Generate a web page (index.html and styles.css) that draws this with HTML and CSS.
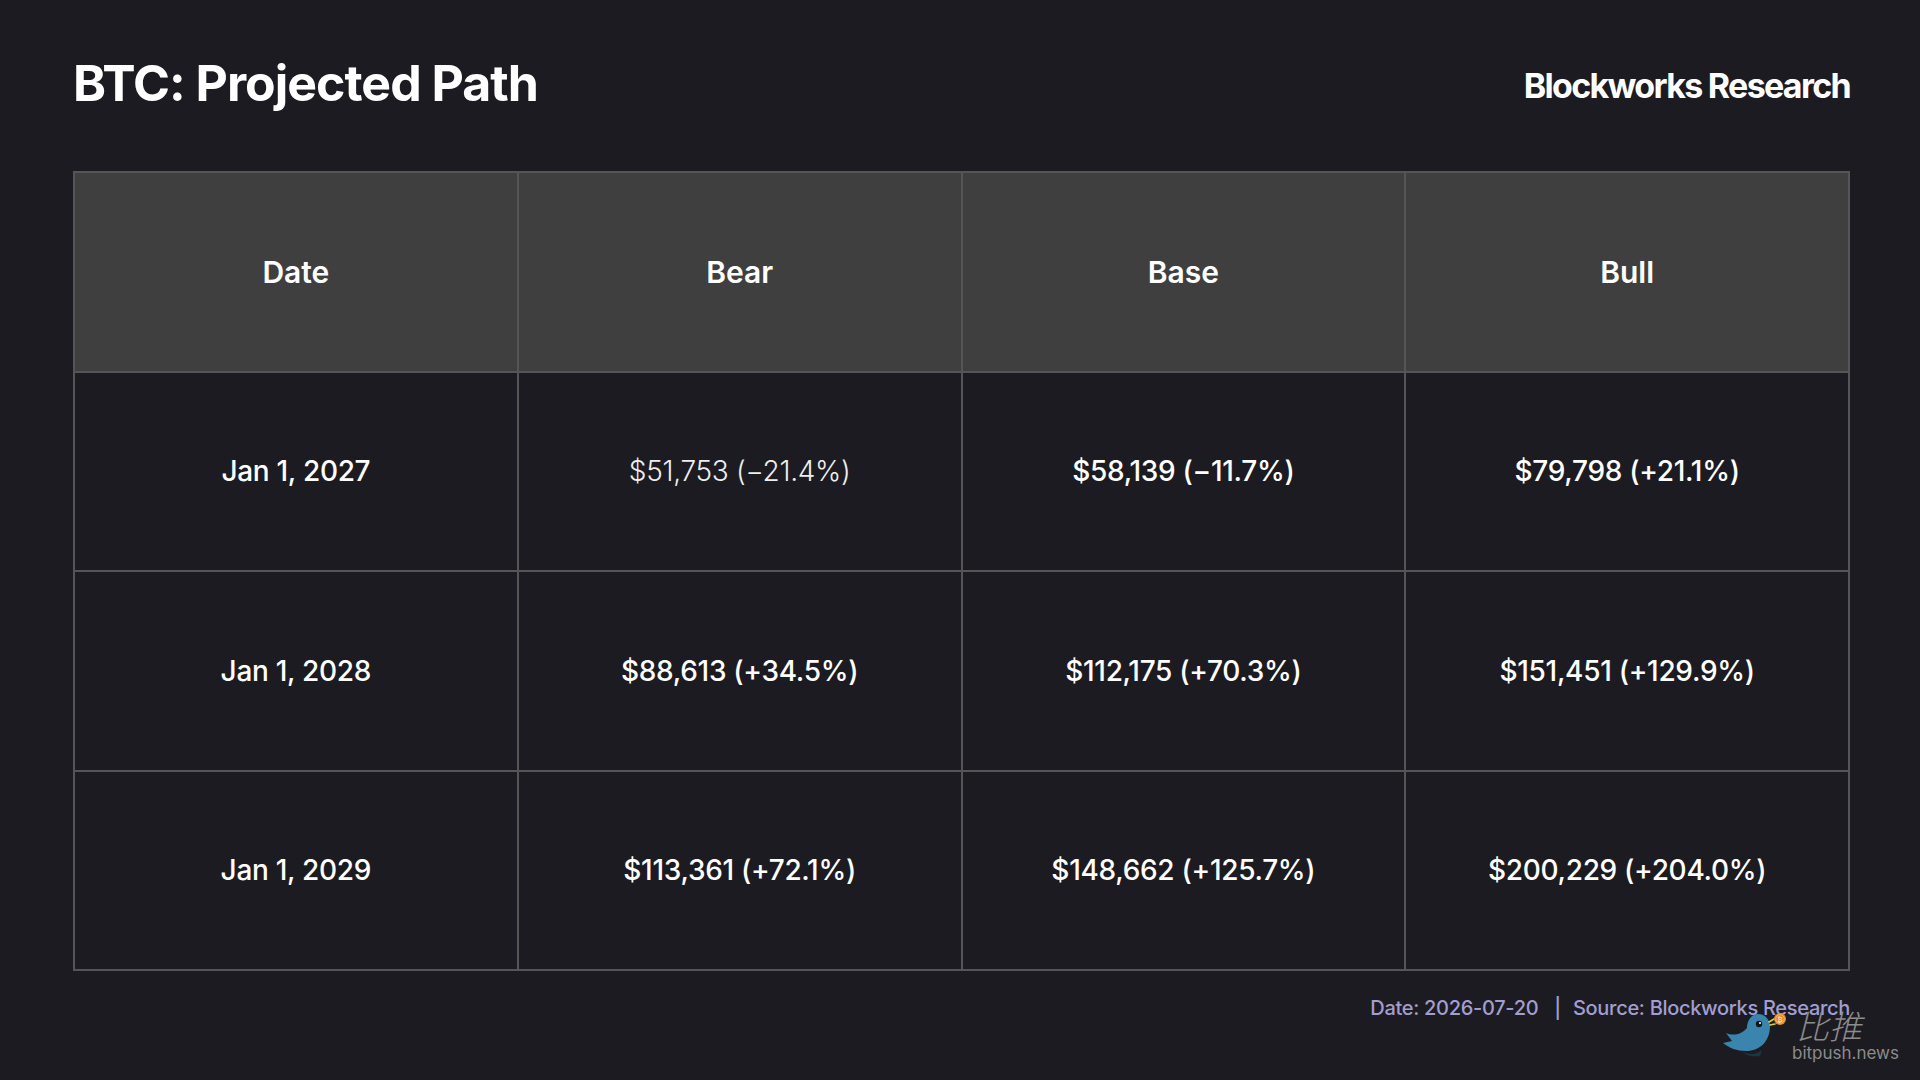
FILE: index.html
```html
<!DOCTYPE html>
<html lang="en">
<head>
<meta charset="utf-8">
<title>BTC: Projected Path</title>
<link rel="stylesheet" href="styles.css">
</head>
<body>
<div class="page">
  <header class="header">
    <h1 class="title">BTC: Projected Path</h1>
    <div class="brand">Blockworks Research</div>
  </header>
  <table class="grid">
    <thead>
      <tr><th>Date</th><th>Bear</th><th>Base</th><th>Bull</th></tr>
    </thead>
    <tbody>
      <tr><td>Jan 1, 2027</td><td class="light">$51,753 (−21.4%)</td><td>$58,139 (−11.7%)</td><td>$79,798 (+21.1%)</td></tr>
      <tr><td>Jan 1, 2028</td><td>$88,613 (+34.5%)</td><td>$112,175 (+70.3%)</td><td>$151,451 (+129.9%)</td></tr>
      <tr><td>Jan 1, 2029</td><td>$113,361 (+72.1%)</td><td>$148,662 (+125.7%)</td><td>$200,229 (+204.0%)</td></tr>
    </tbody>
  </table>
  <footer class="footer">
    <span>Date: 2026-07-20</span><span class="sep">|</span><span>Source: Blockworks Research</span>
  </footer>
  <div class="watermark">
    <svg class="bird" viewBox="0 0 66 46" width="66" height="46">
      <path d="M22 40 C28 44 36 44 42 39 L40 45 C33 46 26 45 22 40 Z" fill="#1d3442"/>
      <path d="M27 17 C27 9 32 3 38 3 C45 3 50 9 50 15 C50 30 40 40 26 40 C17 40 9 37 3 32 L12 30 L6 22 C13 25 21 24 27 17 Z" fill="#3b84ad"/>
      <circle cx="39" cy="13" r="3.2" fill="#10181f"/>
      <circle cx="40" cy="12" r="1" fill="#ffffff"/>
      <path d="M49 11 L54 8 M50 14 L55 13" stroke="#cfd23a" stroke-width="1.6" stroke-linecap="round"/>
      <circle cx="60" cy="8" r="6" fill="#e2872a"/>
      <circle cx="60" cy="8" r="4.3" fill="none" stroke="#f6c27a" stroke-width="0.8"/>
      <text x="60" y="10.8" font-size="7" font-family="DejaVu Sans, sans-serif" text-anchor="middle" fill="#fff3d6">₿</text>
    </svg>
    <div class="wm-text">
      <div class="wm-cn">比推</div>
      <div class="wm-en">bitpush.news</div>
    </div>
  </div>
</div>
</body>
</html>
```
FILE: styles.css
```css
html, body {
  margin: 0;
  padding: 0;
  background: #1c1b21;
}
body {
  font-family: Inter, "Noto Sans", "Liberation Sans", sans-serif;
  color: #ffffff;
}
.page {
  position: relative;
  width: 1920px;
  height: 1080px;
  box-sizing: border-box;
  padding: 0 70px 0 73px;
  overflow: hidden;
}
.header {
  display: flex;
  justify-content: space-between;
  align-items: flex-start;
  padding-top: 53px;
  height: 60px;
  margin-bottom: 58px;
}
.title {
  margin: 0;
  font-size: 50px;
  line-height: 60px;
  font-weight: 700;
  letter-spacing: -1px;
}
.brand {
  margin-top: 13px;
  font-size: 34px;
  line-height: 40px;
  font-weight: 700;
  letter-spacing: -1.7px;
}
.grid {
  width: 100%;
  border-collapse: collapse;
  table-layout: fixed;
}
.grid th, .grid td {
  border: 2px solid #555558;
  height: 197.5px;
  padding: 0;
  text-align: center;
  vertical-align: middle;
  font-size: 28px;
}
.grid th {
  background: #3f3f3f;
  font-weight: 600;
  font-size: 30px;
}
.grid td {
  font-weight: 500;
  letter-spacing: -0.3px;
}
.grid td.light {
  font-weight: 300;
  color: #eeeeee;
}
.footer {
  display: flex;
  justify-content: flex-end;
  align-items: baseline;
  margin-top: 25px;
  font-size: 20px;
  line-height: 24px;
  font-weight: 500;
  letter-spacing: -0.3px;
  color: #a29ed0;
}
.sep {
  margin: 0 12px 0 16px;
}
.watermark {
  position: absolute;
  left: 1720px;
  top: 1007px;
  display: flex;
  align-items: flex-start;
}
.bird {
  display: block;
  margin-top: 4px;
}
.wm-text {
  display: flex;
  flex-direction: column;
  align-items: flex-start;
  margin-left: 6px;
}
.wm-cn {
  font-family: "Noto Sans CJK SC", sans-serif;
  font-size: 33px;
  line-height: 36px;
  font-style: italic;
  font-weight: 300;
  color: #8c8c8c;
  padding-left: 4px;
}
.wm-en {
  font-family: Inter, "Noto Sans", sans-serif;
  font-size: 17px;
  line-height: 20px;
  color: #8c8c8c;
}
```
